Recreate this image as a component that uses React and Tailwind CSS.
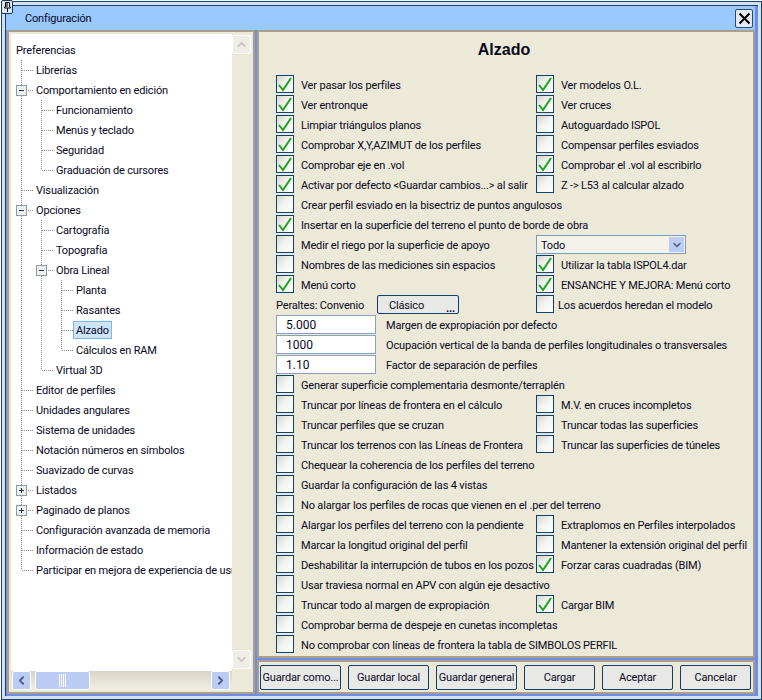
import React from 'react';
import { ChevronUp, ChevronDown, ChevronLeft, ChevronRight } from 'lucide-react';

const TREE = [
  ['Preferencias', ''],
  ['Librerías', 'T'],
  ['Comportamiento en edición', '-'],
  ['Funcionamiento', '|T'],
  ['Menús y teclado', '|T'],
  ['Seguridad', '|T'],
  ['Graduación de cursores', '|L'],
  ['Visualización', 'T'],
  ['Opciones', '-'],
  ['Cartografía', '|T'],
  ['Topografía', '|T'],
  ['Obra Lineal', '|-'],
  ['Planta', '||T'],
  ['Rasantes', '||T'],
  ['Alzado', '||T', true],
  ['Cálculos en RAM', '||L'],
  ['Virtual 3D', '|L'],
  ['Editor de perfiles', 'T'],
  ['Unidades angulares', 'T'],
  ['Sistema de unidades', 'T'],
  ['Notación números en símbolos', 'T'],
  ['Suavizado de curvas', 'T'],
  ['Listados', '+'],
  ['Paginado de planos', '+'],
  ['Configuración avanzada de memoria', 'T'],
  ['Información de estado', 'T'],
  ['Participar en mejora de experiencia de usuario', 'L'],
];

// left: [checked, label], right: [checked, label]
const ROWS = [
  [[1, 'Ver pasar los perfiles'], [1, 'Ver modelos O.L.']],
  [[1, 'Ver entronque'], [1, 'Ver cruces']],
  [[1, 'Limpiar triángulos planos'], [0, 'Autoguardado ISPOL']],
  [[1, 'Comprobar X,Y,AZIMUT de los perfiles'], [0, 'Compensar perfiles esviados']],
  [[1, 'Comprobar eje en .vol'], [1, 'Comprobar el .vol al escribirlo']],
  [[1, 'Activar por defecto <Guardar cambios...> al salir'], [0, 'Z -> L53 al calcular alzado']],
  [[0, 'Crear perfil esviado en la bisectriz de puntos angulosos']],
  [[1, 'Insertar en la superficie del terreno el punto de borde de obra']],
  [[0, 'Medir el riego por la superficie de apoyo'], 'select'],
  [[0, 'Nombres de las mediciones sin espacios'], [1, 'Utilizar la tabla ISPOL4.dar']],
  [[1, 'Menú corto'], [1, 'ENSANCHE Y MEJORA: Menú corto']],
];

const ROWS2 = [
  [[0, 'Generar superficie complementaria desmonte/terraplén']],
  [[0, 'Truncar por líneas de frontera en el cálculo'], [0, 'M.V. en cruces incompletos']],
  [[0, 'Truncar perfiles que se cruzan'], [0, 'Truncar todas las superficies']],
  [[0, 'Truncar los terrenos con las Líneas de Frontera'], [0, 'Truncar las superficies de túneles']],
  [[0, 'Chequear la coherencia de los perfiles del terreno']],
  [[0, 'Guardar la configuración de las 4 vistas']],
  [[0, 'No alargar los perfiles de rocas que vienen en el .per del terreno']],
  [[0, 'Alargar los perfiles del terreno con la pendiente'], [0, 'Extraplomos en Perfiles interpolados']],
  [[0, 'Marcar la longitud original del perfil'], [0, 'Mantener la extensión original del perfil']],
  [[0, 'Deshabilitar la interrupción de tubos en los pozos'], [1, 'Forzar caras cuadradas (BIM)']],
  [[0, 'Usar traviesa normal en APV con algún eje desactivo']],
  [[0, 'Truncar todo al margen de expropiación'], [1, 'Cargar BIM']],
  [[0, 'Comprobar berma de despeje en cunetas incompletas']],
  [[0, 'No comprobar con líneas de frontera la tabla de SIMBOLOS PERFIL']],
];

const FIELDS = [
  ['5.000', 'Margen de expropiación por defecto'],
  ['1000', 'Ocupación vertical de la banda de perfiles longitudinales o transversales'],
  ['1.10', 'Factor de separación de perfiles'],
];

const BUTTONS = [
  ['Guardar como...', 'w-[81px]'],
  ['Guardar local', 'w-[81px]'],
  ['Guardar general', 'w-[81px]'],
  ['Cargar', 'w-[71px]'],
  ['Aceptar', 'w-[71px]'],
  ['Cancelar', 'w-[71px]'],
];

function TreeCell({ kind }) {
  const vertical = kind === '|' || kind === 'T' || kind === '-' || kind === '+';
  const branch = kind !== '|';
  return (
    <svg width="20" height="20" className="block shrink-0 overflow-visible">
      {vertical && <line x1="10.5" y1="0" x2="10.5" y2="20" stroke="#8a8a8a" strokeDasharray="1 1" />}
      {kind === 'L' && <line x1="10.5" y1="0" x2="10.5" y2="10" stroke="#8a8a8a" strokeDasharray="1 1" />}
      {branch && <line x1="11" y1="10.5" x2="22" y2="10.5" stroke="#8a8a8a" strokeDasharray="1 1" />}
      {(kind === '-' || kind === '+') && (
        <g>
          <rect x="5.5" y="5.5" width="10" height="10" fill="#eef0ee" stroke="#8e9aa8" />
          <line x1="8" y1="10.5" x2="13" y2="10.5" stroke="#26384e" />
          {kind === '+' && <line x1="10.5" y1="8" x2="10.5" y2="13" stroke="#26384e" />}
        </g>
      )}
    </svg>
  );
}

function Check({ checked }) {
  return (
    <span className="relative block h-[18px] w-[18px] shrink-0 border border-[#0c4170] bg-gradient-to-br from-[#d8d8d2] via-[#f4f4f0] to-white">
      {checked ? (
        <svg viewBox="0 0 16 16" className="absolute left-0 top-0 h-4 w-4">
          <path d="M2 9 L6 14 L14 2" fill="none" stroke="#1ea51e" strokeWidth="2" />
        </svg>
      ) : null}
    </span>
  );
}

function Option({ item, right, labelClass = 'ml-[7px]' }) {
  return (
    <div className={`flex h-5 items-start ${right ? 'w-[215px]' : 'w-[260px]'}`}>
      <Check checked={item[0]} />
      <span className={`${labelClass} whitespace-nowrap leading-[22px]`}>{item[1]}</span>
    </div>
  );
}

function OptionRow({ row }) {
  return (
    <div className="flex h-5 items-start">
      <Option item={row[0]} />
      {row[1] === 'select' ? (
        <div className="flex h-[19px] w-[150px] items-center justify-between border border-[#7f9db9] bg-[#f4f3ea] pl-[4px] pr-px">
          <span className="pt-px">Todo</span>
          <span className="flex h-[15px] w-[15px] items-center justify-center bg-[#bccdf5]">
            <ChevronDown size={12} strokeWidth={3} className="text-[#4d6185]" />
          </span>
        </div>
      ) : row[1] ? (
        <Option item={row[1]} right />
      ) : null}
    </div>
  );
}

function ScrollButton({ children, className }) {
  return (
    <div className={`flex shrink-0 items-center justify-center rounded-[2px] border border-white ${className}`}>
      {children}
    </div>
  );
}

export default function App() {
  return (
    <div
      className="relative h-[700px] w-[762px] overflow-hidden bg-white pl-px pt-px text-[11px] leading-none tracking-[-0.16px] text-[#08081c]"
      style={{ fontFamily: 'Roboto, "Liberation Sans", Arial, sans-serif' }}
    >
      {/* Pin */}
      <div className="absolute left-px top-0 z-10 flex h-[14px] w-[12px] items-center justify-center rounded-[2px] border border-[#10365c] bg-[#dfe9f6]">
        <svg viewBox="0 0 9 10" className="h-[10px] w-[9px]">
          <path d="M2.5 .5h4v4.5h1v1h-6v-1h1zM4.5 6v4M4 1v4" fill="none" stroke="#000" />
        </svg>
      </div>

      <div className="h-[699px] w-[761px] border border-[#14446f] bg-[#d5dfee] p-[3px]">
        <div className="flex h-full flex-col border-l border-t border-[#14446f] bg-[#6e8de6] pl-px pr-[3px]">
          {/* Title bar */}
          <div className="-ml-px flex h-[24px] shrink-0 items-center justify-between bg-[#99c9ff] pl-[19px] pr-[2px]">
            <span className="pt-px">Configuración</span>
            <div className="flex h-[19px] w-[18px] items-center justify-center rounded-[2px] border border-[#1d4f78] bg-[#e6e9f0]">
              <svg viewBox="0 0 13 13" className="h-[13px] w-[13px]">
                <path d="M1.5 1.5 L11.5 11.5 M11.5 1.5 L1.5 11.5" stroke="#000" strokeWidth="2" />
              </svg>
            </div>
          </div>

          <div className="flex min-h-0 flex-1 gap-[2px] border-b-[2px] border-[#6e8de6]">
            {/* Tree panel */}
            <div className="flex w-[248px] shrink-0 flex-col border-[2px] border-[#aa9f8a]">
              <div className="flex min-h-0 flex-1 border-[2px] border-[#ece9d8] bg-[#ece9d8]">
                <div className="flex min-w-0 flex-1 flex-col">
                  <div className="min-h-0 flex-1 overflow-hidden bg-white pt-[6px]">
                    {TREE.map(([label, cells, selected]) => (
                      <div key={label} className="flex h-5 items-center whitespace-nowrap">
                        {[...cells].map((kind, i) => (
                          <TreeCell key={i} kind={kind} />
                        ))}
                        <span
                          className={
                            selected
                              ? 'relative ml-[2px] flex h-[18px] items-center border border-[#7eb4ea] bg-[#cde5fb] px-[2px]'
                              : 'relative ml-[5px]'
                          }
                        >
                          {label}
                        </span>
                      </div>
                    ))}
                  </div>
                  {/* Horizontal scrollbar */}
                  <div className="flex h-[19px] shrink-0 bg-gradient-to-b from-[#d8d4c6] to-[#f2f0e6]">
                    <ScrollButton className="ml-px h-[19px] w-[19px] bg-[#bccdf5]">
                      <ChevronLeft size={13} strokeWidth={3.5} className="text-[#4d6185]" />
                    </ScrollButton>
                    <div className="ml-[4px] flex h-[19px] w-[55px] items-center justify-center rounded-[2px] border border-white bg-[#bccdf5]">
                      <div className="h-[13px] w-[7px] bg-[repeating-linear-gradient(90deg,#fff_0,#fff_1px,#bccdf5_1px,#bccdf5_2px)]" />
                    </div>
                    <div className="flex-1" />
                    <ScrollButton className="mr-[2px] h-[19px] w-[19px] bg-[#bccdf5]">
                      <ChevronRight size={13} strokeWidth={3.5} className="text-[#4d6185]" />
                    </ScrollButton>
                  </div>
                </div>
                {/* Vertical scrollbar */}
                <div className="flex w-[19px] shrink-0 flex-col pb-[21px] pt-px">
                  <ScrollButton className="h-[19px] w-[19px] border-[#fbfbf8] bg-[#eeede6]">
                    <ChevronUp size={13} strokeWidth={3.5} className="text-[#c9c7ba]" />
                  </ScrollButton>
                  <div className="flex-1" />
                  <ScrollButton className="h-[19px] w-[19px] border-[#fbfbf8] bg-[#eeede6]">
                    <ChevronDown size={13} strokeWidth={3.5} className="text-[#c9c7ba]" />
                  </ScrollButton>
                </div>
              </div>
            </div>

            {/* Right side */}
            <div className="flex min-w-0 flex-1 flex-col gap-[2px]">
              <div className="min-h-0 flex-1 border-[2px] border-[#aa9f8a]">
                <div className="h-full border-[2px] border-[#ece9d8] bg-[#ece9d8] pl-[15px]">
                  <h1
                    className="h-[41px] pr-[19px] pt-[8px] text-center text-[16px] font-bold leading-none tracking-normal"
                    style={{ fontFamily: '"Liberation Sans", Arial, sans-serif' }}
                  >
                    Alzado
                  </h1>
                  {ROWS.map((row, i) => (
                    <OptionRow key={i} row={row} />
                  ))}
                  <div className="flex h-5 items-start">
                    <span className="w-[101px] leading-[22px]">Peraltes: Convenio</span>
                    <div className="relative flex h-[19px] w-[82px] items-center rounded-[2px] border border-[#0f3f6d] bg-[#e8e8e6] pl-[11px] pt-px">
                      Clásico
                      <span className="absolute bottom-px right-[3px] font-bold leading-[7px]">...</span>
                    </div>
                    <div className="ml-[77px]">
                      <Option item={[0, 'Los acuerdos heredan el modelo']} right labelClass="ml-[4px]" />
                    </div>
                  </div>
                  {FIELDS.map(([value, label]) => (
                    <div key={label} className="flex h-5 items-start">
                      <div className="flex h-[19px] w-[100px] items-center border border-[#86a0bd] bg-white pl-[9px] pt-px text-[12px] tracking-normal">{value}</div>
                      <span className="ml-[10px] whitespace-nowrap leading-[22px]">{label}</span>
                    </div>
                  ))}
                  {ROWS2.map((row, i) => (
                    <OptionRow key={i} row={row} />
                  ))}
                </div>
              </div>
              {/* Buttons */}
              <div className="flex h-[34px] shrink-0 items-center gap-[7px] border-[2px] border-[#aa9f8a] bg-[#ece9d8] pl-px">
                {BUTTONS.map(([label, width]) => (
                  <div
                    key={label}
                    className={`flex h-[25px] items-center justify-center whitespace-nowrap rounded-[2px] border border-[#0f3f6d] bg-[#e8e8e6] ${width}`}
                  >
                    {label}
                  </div>
                ))}
              </div>
            </div>
          </div>
        </div>
      </div>
    </div>
  );
}
